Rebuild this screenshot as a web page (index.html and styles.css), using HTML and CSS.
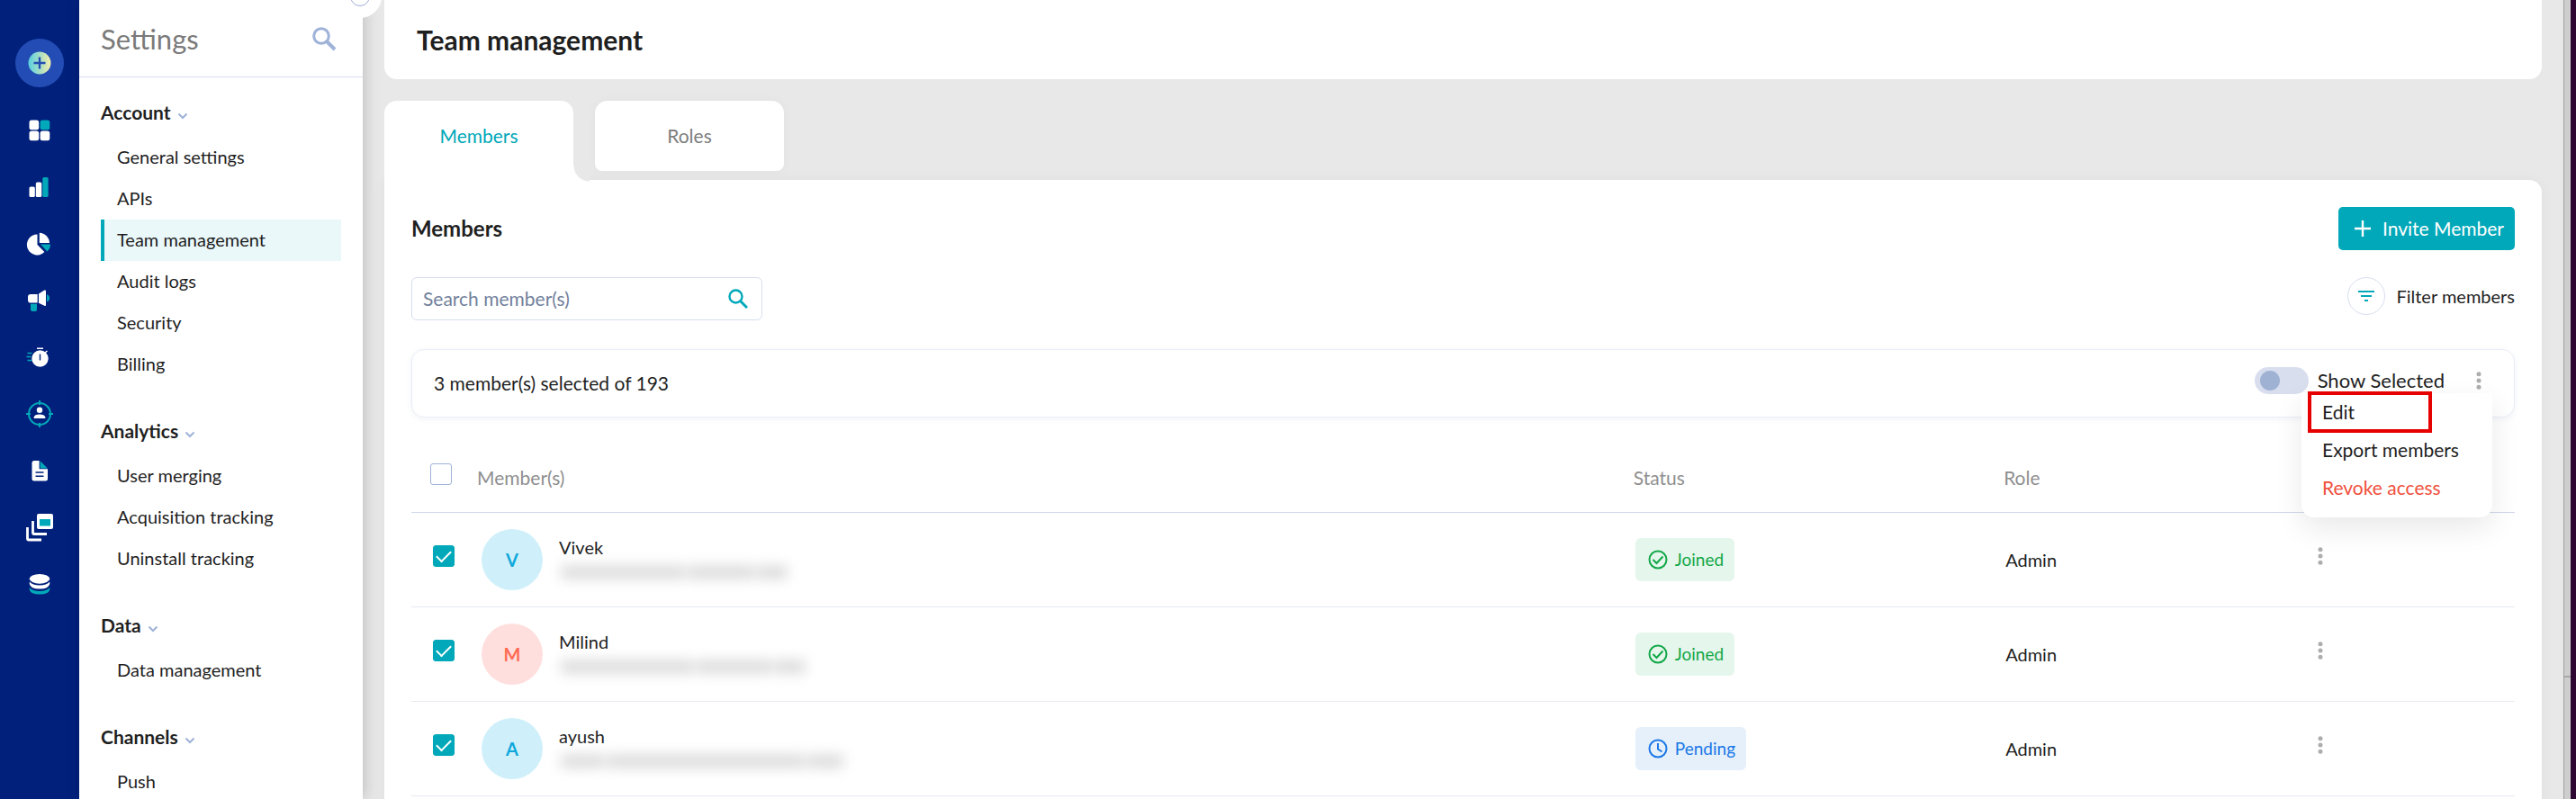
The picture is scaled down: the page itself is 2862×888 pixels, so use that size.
FILE: index.html
```html
<!DOCTYPE html>
<html lang="en">
<head>
    <meta charset="UTF-8">
    <meta name="viewport" content="width=device-width, initial-scale=1.0">
    <title>Team management</title>
    <link rel="stylesheet" href="styles.css">
</head>
<body>
<div class="app">

    <!-- Icon rail -->
    <nav class="rail" aria-label="Main">
        <button class="create-btn" aria-label="Create">
            <svg width="26" height="26" viewBox="0 0 26 26">
                <defs>
                    <linearGradient id="createFill"><stop offset="0" stop-color="#58cfe0"/><stop offset="1" stop-color="#f4edaa"/></linearGradient>
                </defs>
                <circle cx="13" cy="13" r="12.5" fill="url(#createFill)"/>
                <path d="M13 6.5v13M6.5 13h13" stroke="#234db5" stroke-width="2.4"/>
            </svg>
        </button>
        <a href="#" class="rail-link" aria-label="Dashboard">
            <svg width="30" height="30" viewBox="0 0 30 30" fill="#fff">
                <rect x="3.5" y="3.5" width="10.7" height="10.7" rx="2.5"/>
                <rect x="15.6" y="3.5" width="10.7" height="10.7" rx="2.5" fill="#00a8b9"/>
                <rect x="3.5" y="15.6" width="10.7" height="10.7" rx="2.5"/>
                <rect x="15.6" y="15.6" width="10.7" height="10.7" rx="2.5"/>
            </svg>
        </a>
        <a href="#" class="rail-link" aria-label="Analytics">
            <svg width="30" height="30" viewBox="0 0 30 30" fill="#fff">
                <rect x="3.5" y="14.5" width="6.3" height="11.5" rx="1.6"/>
                <rect x="10.8" y="9.5" width="6.5" height="16.5" rx="1.6"/>
                <rect x="18.3" y="4" width="6.3" height="22" rx="1.6" fill="#00a8b9"/>
            </svg>
        </a>
        <a href="#" class="rail-link" aria-label="Segments">
            <svg width="30" height="30" viewBox="0 0 30 30" fill="#fff">
                <path d="M12.5 4.6A11.4 11.4 0 1 0 20.4 24L12.5 16z"/>
                <path d="M14.8 2.8A11.5 11.5 0 0 1 26 14H14.8z"/>
                <path d="M16 15.6h11a11 11 0 0 1-3.6 8z" fill="#00a8b9"/>
            </svg>
        </a>
        <a href="#" class="rail-link" aria-label="Campaigns">
            <svg width="30" height="30" viewBox="0 0 30 30" fill="#fff">
                <path d="M5 8h7.7v9.6H5Q2 17.600 2 14.500V11Q2 8 5 8z"/>
                <path d="M14 7.600L20.300 3.600Q22 3 22 4.600V20Q22 21.500 20.300 20.800L14 17.800z"/>
                <path d="M23 8.200Q26 9 26 12.300T23 16.500z" fill="#00a8b9"/>
                <path d="M5 18.800h7V25q0 2-2 2H7q-2 0-2-2z" fill="#00a8b9"/>
            </svg>
        </a>
        <a href="#" class="rail-link" aria-label="Flows">
            <svg width="30" height="30" viewBox="0 0 30 30">
                <path d="M1.500 10.500h5M.5 14.500h5M1.500 18.500h5" stroke="#00a8b9" stroke-width="1.400"/>
                <circle cx="15.500" cy="16.500" r="9.200" fill="#fff"/>
                <path d="M12 5.200h7M21 10l2.500-2" stroke="#fff" stroke-width="1.600"/>
                <path d="M15.500 11.500v7" stroke="#00207c" stroke-width="1.400"/>
            </svg>
        </a>
        <a href="#" class="rail-link" aria-label="Personalize">
            <svg width="30" height="30" viewBox="0 0 30 30">
                <circle cx="15" cy="15" r="12" fill="none" stroke="#00a8b9" stroke-width="2"/>
                <path d="M15 0v5M15 25v5M0 15h5M25 15h5" stroke="#00a8b9" stroke-width="2"/>
                <circle cx="15" cy="10.800" r="3.200" fill="#fff"/>
                <path d="M8.700 20v-1.500Q9.500 15.400 15 15.400T21.300 18.500V20z" fill="#fff"/>
            </svg>
        </a>
        <a href="#" class="rail-link" aria-label="Content">
            <svg width="30" height="30" viewBox="0 0 30 30">
                <path d="M9 4h5.600v9.300H24V24q0 2.500-2.500 2.500H9Q6.500 26.500 6.500 24V6.500Q6.500 4 9 4z" fill="#fff"/>
                <path d="M15.600 4.300l8.200 8.200h-8.200z" fill="#00a8b9"/>
                <path d="M10.500 17h9M10.500 21.200h9" stroke="#00207c" stroke-width="1.500"/>
            </svg>
        </a>
        <a href="#" class="rail-link" aria-label="Templates">
            <svg width="32" height="32" viewBox="0 0 32 32" fill="none">
                <rect x="13" y="1" width="18" height="17" rx="2" fill="#fff"/>
                <rect x="16" y="7" width="12" height="7.500" fill="#00a8b9"/>
                <path d="M8.500 9v13q0 1.500 1.500 1.500h14" stroke="#fff" stroke-width="2.800"/>
                <path d="M2.500 16v12.500q0 1.500 1.500 1.500h14" stroke="#fff" stroke-width="2.800"/>
            </svg>
        </a>
        <a href="#" class="rail-link" aria-label="Data">
            <svg width="30" height="30" viewBox="0 0 30 30">
                <ellipse cx="15" cy="9.300" rx="11.200" ry="5.400" fill="#fff"/>
                <path d="M3.800 12.500Q7 16.500 15 16.500T26.200 12.500V15Q25 20.500 15 20.500T3.800 15z" fill="#fff"/>
                <path d="M3.800 19Q7 23 15 23T26.200 19V21.500Q25 26.500 15 26.500T3.800 21.500z" fill="#00a8b9"/>
            </svg>
        </a>
    </nav>

    <!-- Settings sidebar -->
    <aside class="sidebar">
        <button class="collapse-btn" aria-label="Collapse settings"></button>
        <div class="sidebar-head">
            <h2 class="sidebar-title">Settings</h2>
            <button class="icon-btn" aria-label="Search settings">
                <svg width="28" height="28" viewBox="0 0 28 28" fill="none" stroke="#9fb2d8">
                    <circle cx="11" cy="11" r="8.300" stroke-width="3"/>
                    <path d="M17 17l9 9" stroke-width="4"/>
                </svg>
            </button>
        </div>
        <div class="sidebar-body">
            <section class="nav-group">
                <button class="nav-title">Account <svg class="chevron" width="12" height="8" viewBox="0 0 12 8"><path d="M1.500 1.500L6 6l4.500-4.500"/></svg></button>
                <a href="#" class="nav-item">General settings</a>
                <a href="#" class="nav-item">APIs</a>
                <a href="#" class="nav-item active">Team management</a>
                <a href="#" class="nav-item">Audit logs</a>
                <a href="#" class="nav-item">Security</a>
                <a href="#" class="nav-item">Billing</a>
            </section>
            <section class="nav-group">
                <button class="nav-title">Analytics <svg class="chevron" width="12" height="8" viewBox="0 0 12 8"><path d="M1.500 1.500L6 6l4.500-4.500"/></svg></button>
                <a href="#" class="nav-item">User merging</a>
                <a href="#" class="nav-item">Acquisition tracking</a>
                <a href="#" class="nav-item">Uninstall tracking</a>
            </section>
            <section class="nav-group">
                <button class="nav-title">Data <svg class="chevron" width="12" height="8" viewBox="0 0 12 8"><path d="M1.500 1.500L6 6l4.500-4.500"/></svg></button>
                <a href="#" class="nav-item">Data management</a>
            </section>
            <section class="nav-group">
                <button class="nav-title">Channels <svg class="chevron" width="12" height="8" viewBox="0 0 12 8"><path d="M1.500 1.500L6 6l4.500-4.500"/></svg></button>
                <a href="#" class="nav-item">Push</a>
            </section>
        </div>
    </aside>

    <!-- Main content -->
    <main class="main">
        <header class="page-head">
            <h1 class="page-title">Team management</h1>
        </header>

        <div class="tabs">
            <button class="tab active">Members</button>
            <button class="tab">Roles</button>
        </div>

        <div class="panel">
            <div class="panel-head">
                <h3 class="panel-title">Members</h3>
                <button class="invite-btn">
                    <svg width="18" height="18" viewBox="0 0 18 18"><path d="M9 0v18M0 9h18" stroke="#fff" stroke-width="2.400"/></svg>
                    Invite Member
                </button>
            </div>

            <div class="tools">
                <div class="search">
                    <input type="text" class="search-input" placeholder="Search member(s)" aria-label="Search member(s)">
                    <button class="icon-btn" aria-label="Search">
                        <svg width="22" height="22" viewBox="0 0 22 22" fill="none" stroke="#00a8b9">
                            <circle cx="8.500" cy="8.500" r="7" stroke-width="2.400"/>
                            <path d="M13.500 13.500l7.500 7.500" stroke-width="3"/>
                        </svg>
                    </button>
                </div>
                <button class="filter-btn">
                    <span class="filter-icon">
                        <svg width="20" height="14" viewBox="0 0 20 14"><path d="M1 2h18M4 7h12M8 12h4" stroke="#00a8b9" stroke-width="2.200"/></svg>
                    </span>
                    Filter members
                </button>
            </div>

            <div class="selection-bar">
                <span>3 member(s) selected of 193</span>
                <div class="selection-actions">
                    <label class="show-selected">
                        <input type="checkbox" class="toggle">
                        Show Selected
                    </label>
                    <div class="menu-wrap">
                        <button class="dots-btn" aria-label="Bulk actions"><svg class="dots" width="6" height="20" viewBox="0 0 6 20"><circle cx="3" cy="2.700" r="2.500"/><circle cx="3" cy="10" r="2.500"/><circle cx="3" cy="17.300" r="2.500"/></svg></button>
                        <div class="menu">
                            <button class="menu-item marked">Edit</button>
                            <button class="menu-item">Export members</button>
                            <button class="menu-item danger">Revoke access</button>
                        </div>
                    </div>
                </div>
            </div>

            <table class="members">
                <colgroup>
                    <col class="col-check">
                    <col>
                    <col class="col-status">
                    <col class="col-role">
                    <col class="col-actions">
                </colgroup>
                <thead>
                    <tr>
                        <th class="cell-check"><input type="checkbox" class="check" aria-label="Select all"></th>
                        <th>Member(s)</th>
                        <th>Status</th>
                        <th>Role</th>
                        <th></th>
                    </tr>
                </thead>
                <tbody>
                    <tr>
                        <td class="cell-check"><input type="checkbox" class="check" aria-label="Select Vivek" checked></td>
                        <td>
                            <div class="member">
                                <span class="avatar blue">V</span>
                                <div>
                                    <div class="name">Vivek</div>
                                    <div class="redacted"><i style="width: 138px"></i><i style="width: 74px"></i><i style="width: 34px"></i></div>
                                </div>
                            </div>
                        </td>
                        <td>
                            <span class="pill joined">
                                <svg width="22" height="22" viewBox="0 0 22 22"><circle cx="11" cy="11" r="9.500"/><path d="M5.500 11l4 4L16.500 7.500"/></svg>
                                Joined
                            </span>
                        </td>
                        <td>Admin</td>
                        <td class="cell-actions"><button class="dots-btn" aria-label="Vivek actions"><svg class="dots" width="6" height="20" viewBox="0 0 6 20"><circle cx="3" cy="2.700" r="2.500"/><circle cx="3" cy="10" r="2.500"/><circle cx="3" cy="17.300" r="2.500"/></svg></button></td>
                    </tr>
                    <tr>
                        <td class="cell-check"><input type="checkbox" class="check" aria-label="Select Milind" checked></td>
                        <td>
                            <div class="member">
                                <span class="avatar red">M</span>
                                <div>
                                    <div class="name">Milind</div>
                                    <div class="redacted"><i style="width: 148px"></i><i style="width: 84px"></i><i style="width: 34px"></i></div>
                                </div>
                            </div>
                        </td>
                        <td>
                            <span class="pill joined">
                                <svg width="22" height="22" viewBox="0 0 22 22"><circle cx="11" cy="11" r="9.500"/><path d="M5.500 11l4 4L16.500 7.500"/></svg>
                                Joined
                            </span>
                        </td>
                        <td>Admin</td>
                        <td class="cell-actions"><button class="dots-btn" aria-label="Milind actions"><svg class="dots" width="6" height="20" viewBox="0 0 6 20"><circle cx="3" cy="2.700" r="2.500"/><circle cx="3" cy="10" r="2.500"/><circle cx="3" cy="17.300" r="2.500"/></svg></button></td>
                    </tr>
                    <tr>
                        <td class="cell-check"><input type="checkbox" class="check" aria-label="Select ayush" checked></td>
                        <td>
                            <div class="member">
                                <span class="avatar blue">A</span>
                                <div>
                                    <div class="name">ayush</div>
                                    <div class="redacted"><i style="width: 48px"></i><i style="width: 220px"></i><i style="width: 40px"></i></div>
                                </div>
                            </div>
                        </td>
                        <td>
                            <span class="pill pending">
                                <svg width="22" height="22" viewBox="0 0 22 22"><circle cx="11" cy="11" r="9.500"/><path d="M11 5v6.500l4.500 3"/></svg>
                                Pending
                            </span>
                        </td>
                        <td>Admin</td>
                        <td class="cell-actions"><button class="dots-btn" aria-label="ayush actions"><svg class="dots" width="6" height="20" viewBox="0 0 6 20"><circle cx="3" cy="2.700" r="2.500"/><circle cx="3" cy="10" r="2.500"/><circle cx="3" cy="17.300" r="2.500"/></svg></button></td>
                    </tr>
                </tbody>
            </table>
        </div>
    </main>

    <!-- Window edge -->
    <div class="edge"></div>
</div>
</body>
</html>
```
FILE: styles.css
```css
*,
*::before,
*::after {
    margin: 0;
    padding: 0;
    box-sizing: border-box;
}

body {
    font-family: Lato, "Open Sans", sans-serif;
    font-size: 20px;
    line-height: 24px;
    color: #1f1f1f;
    background-color: #e8e8e8;
}

button {
    font: inherit;
    color: inherit;
    background: none;
    border: none;
    cursor: pointer;
}

a {
    color: inherit;
    text-decoration: none;
}

svg {
    display: block;
    flex: none;
}

.app {
    display: flex;
    height: 100vh;
    overflow: hidden;
}

/* Icon rail */
.rail {
    flex: none;
    width: 88px;
    padding-top: 43px;
    background-color: #00207c;
    display: flex;
    flex-direction: column;
    align-items: center;
}

.create-btn {
    width: 54px;
    height: 54px;
    margin-bottom: 16px;
    border-radius: 50%;
    background-color: #234db5;
    display: flex;
    align-items: center;
    justify-content: center;
    flex: none;
}

.rail-link {
    flex: none;
    width: 100%;
    height: 63px;
    display: flex;
    align-items: center;
    justify-content: center;
}

/* Settings sidebar */
.sidebar {
    position: relative;
    z-index: 2;
    flex: none;
    width: 315px;
    background-color: #fff;
    box-shadow: 2px 0 16px rgba(0, 0, 0, 0.18);
}

.collapse-btn {
    position: absolute;
    top: -28px;
    right: -21px;
    width: 48px;
    height: 48px;
    border-radius: 50%;
    background-color: #fff;
    display: flex;
    align-items: center;
    justify-content: center;
}

.collapse-btn::before {
    content: "";
    width: 22px;
    height: 22px;
    border: 1px solid #9fb2d8;
    border-radius: 50%;
}

.sidebar-head {
    height: 86px;
    padding: 0 29px 0 24px;
    border-bottom: 1px solid #d8deee;
    display: flex;
    align-items: center;
    justify-content: space-between;
}

.sidebar-title {
    font-size: 31px;
    line-height: 36px;
    font-weight: 400;
    color: #7a7a7a;
}

.icon-btn {
    display: flex;
}

.sidebar-body {
    padding: 27px 24px 0;
    display: flex;
    flex-direction: column;
    gap: 39px;
}

.nav-group {
    display: flex;
    flex-direction: column;
}

.nav-title {
    margin-bottom: 15px;
    font-size: 21px;
    font-weight: 700;
    display: flex;
    align-items: center;
    gap: 7px;
}

.chevron {
    margin-top: 8px;
    fill: none;
    stroke: #9fb2d8;
    stroke-width: 2;
}

.nav-item {
    height: 46px;
    line-height: 44px;
    padding-left: 14px;
    border-left: 4px solid transparent;
}

.nav-item.active {
    background-color: #eaf8fa;
    border-left-color: #00a8b9;
}

/* Main content */
.main {
    flex: 1;
    min-width: 0;
    padding: 0 24px;
    display: flex;
    flex-direction: column;
}

.page-head {
    flex: none;
    height: 88px;
    padding: 0 36px;
    background-color: #fff;
    border-radius: 0 0 14px 14px;
    display: flex;
    align-items: center;
}

.page-title {
    font-size: 30px;
    line-height: 36px;
    font-weight: 700;
}

.tabs {
    display: flex;
    gap: 24px;
    margin-top: 24px;
}

.tab {
    width: 210px;
    height: 78px;
    margin-bottom: 10px;
    font-size: 21px;
    color: #7d7d7d;
    background-color: #fff;
    border-radius: 14px 14px 8px 8px;
    box-shadow: 0 0 12px rgba(0, 0, 0, 0.03);
}

.tab.active {
    position: relative;
    z-index: 1;
    height: 88px;
    margin-bottom: 0;
    padding-bottom: 10px;
    color: #00a8b9;
    border-radius: 14px 14px 0 0;
    box-shadow: none;
}

/* inverted corner between the active tab and the panel */
.tab.active::after {
    content: "";
    position: absolute;
    left: 100%;
    bottom: -2px;
    width: 18px;
    height: 18px;
    background: radial-gradient(circle at 100% 0, #e8e8e8 17px, #fff 18px);
}

.panel {
    flex: 1 0 auto;
    padding: 30px;
    background-color: #fff;
    border-radius: 0 14px 0 0;
    box-shadow: 0 0 16px rgba(0, 0, 0, 0.04);
}

.panel-head {
    display: flex;
    align-items: center;
    justify-content: space-between;
}

.panel-title {
    font-size: 24px;
    line-height: 30px;
    font-weight: 700;
}

.invite-btn {
    height: 48px;
    padding: 0 12px 0 18px;
    color: #fff;
    font-size: 21px;
    background-color: #00a8b9;
    border-radius: 5px;
    display: flex;
    align-items: center;
    gap: 13px;
}

.tools {
    margin-top: 30px;
    display: flex;
    align-items: flex-start;
    justify-content: space-between;
}

.search {
    width: 390px;
    height: 48px;
    padding: 0 15px 0 12px;
    border: 1px solid #d8deee;
    border-radius: 6px;
    display: flex;
    align-items: center;
}

.search-input {
    flex: 1;
    min-width: 0;
    border: none;
    outline: none;
    font: inherit;
    font-size: 21px;
}

.search-input::placeholder {
    color: #72819c;
}

.filter-btn {
    display: flex;
    align-items: center;
    gap: 12px;
}

.filter-icon {
    width: 42px;
    height: 42px;
    border: 1px solid #d8deee;
    border-radius: 50%;
    display: flex;
    align-items: center;
    justify-content: center;
}

.selection-bar {
    height: 76px;
    margin-top: 32px;
    padding: 0 29px 0 24px;
    font-size: 21px;
    border: 1px solid #e8ecf6;
    border-radius: 14px;
    box-shadow: 0 2px 6px rgba(60, 80, 140, 0.07);
    display: flex;
    align-items: center;
    justify-content: space-between;
}

.selection-actions {
    padding-bottom: 6px;
    display: flex;
    align-items: center;
    gap: 28px;
}

.show-selected {
    font-size: 22px;
    display: flex;
    align-items: center;
    gap: 10px;
}

.toggle {
    appearance: none;
    width: 60px;
    height: 30px;
    padding: 4px 6px;
    border-radius: 15px;
    background-color: #d8deee;
}

.toggle::before {
    content: "";
    display: block;
    width: 22px;
    height: 22px;
    border-radius: 50%;
    background-color: #9fb2d4;
}

.dots-btn {
    width: 20px;
    height: 20px;
    display: flex;
    justify-content: center;
}

.dots {
    fill: #adadad;
}

/* Bulk actions menu */
.menu-wrap {
    position: relative;
}

.menu {
    position: absolute;
    z-index: 3;
    top: 24px;
    right: -5px;
    width: 212px;
    padding-bottom: 12px;
    background-color: #fff;
    border-radius: 0 0 14px 14px;
    box-shadow: 0 12px 32px rgba(0, 0, 0, 0.09);
}

.menu-item {
    display: block;
    width: 100%;
    height: 42px;
    padding-left: 23px;
    text-align: left;
}

.menu-item.danger {
    color: #f0503c;
}

.menu-item.marked {
    position: relative;
}

.menu-item.marked::after {
    content: "";
    position: absolute;
    top: -2px;
    left: 7px;
    width: 138px;
    height: 46px;
    border: 4px solid #e60000;
}

/* Members table */
.members {
    width: 100%;
    margin-top: 30px;
    table-layout: fixed;
    border-collapse: collapse;
}

.col-check {
    width: 73px;
}

.col-status {
    width: 17.6%;
}

.col-role {
    width: 14%;
}

.col-actions {
    width: 10.3%;
}

.members th {
    height: 75px;
    font-size: 21px;
    font-weight: 400;
    text-align: left;
    color: #8f8f8f;
    border-bottom: 1px solid #d0d8ea;
}

.members td {
    height: 105px;
    padding-left: 2px;
    border-bottom: 1px solid #e8eaf2;
}

.members .cell-check {
    padding: 0 0 8px 24px;
}

.members th.cell-check {
    padding-left: 21px;
}

.members .cell-actions {
    padding: 0 0 8px 15px;
}

.check {
    appearance: none;
    display: block;
    width: 24px;
    height: 24px;
    border: 1px solid #9fb2d8;
    border-radius: 3px;
}

.check:checked {
    border-color: #00a8b9;
    background-color: #00a8b9;
}

.check:checked::before {
    content: "";
    display: block;
    width: 16px;
    height: 9px;
    margin: 5px 0 0 3px;
    border-left: 2px solid #fff;
    border-bottom: 2px solid #fff;
    transform: rotate(-45deg);
}

.member {
    padding-left: 3px;
    display: flex;
    align-items: center;
    gap: 18px;
}

.avatar {
    flex: none;
    width: 68px;
    height: 68px;
    line-height: 68px;
    border-radius: 50%;
    text-align: center;
    font-weight: 700;
}

.avatar.blue {
    color: #10a8dc;
    background-color: #cff0fa;
}

.avatar.red {
    color: #ff6a52;
    background-color: #ffdfde;
}

.name {
    line-height: 28px;
}

.redacted {
    height: 28px;
    padding-left: 2px;
    display: flex;
    align-items: center;
    gap: 3px;
    filter: blur(7px);
}

.redacted i {
    height: 16px;
    background-color: #dedede;
}

.pill {
    display: inline-flex;
    align-items: center;
    gap: 8px;
    height: 48px;
    padding: 0 12px 0 14px;
    font-size: 19px;
    border-radius: 6px;
    vertical-align: middle;
}

.pill svg {
    fill: none;
    stroke: currentColor;
    stroke-width: 2;
}

.pill.joined {
    color: #12a748;
    background-color: #e5f6ec;
}

.pill.pending {
    color: #1b78e6;
    background-color: #e5f0fb;
}

/* Window edge */
.edge {
    flex: none;
    width: 14px;
    background: linear-gradient(#a8a8a8, #a8a8a8) 0 751px / 8px 2px no-repeat #cecece;
    border-left: 1px solid #a0a0a0;
    border-right: 6px solid #2e0832;
}
```
